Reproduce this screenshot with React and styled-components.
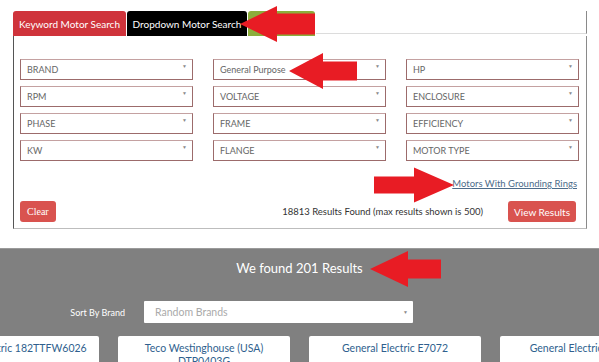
import styled, { createGlobalStyle } from 'styled-components';

const GlobalStyle = createGlobalStyle`
  html, body {
    margin: 0;
    padding: 0;
    overflow: hidden;
    background: #fff;
    font-family: Lato, 'Noto Sans', sans-serif;
  }
`;

const Page = styled.div`
  position: relative;
  width: 599px;
  height: 362px;
  overflow: hidden;
`;

const TopArea = styled.div`
  padding: 11px 12px 0 13px;
`;

const Tabs = styled.div`
  display: flex;
  height: 25px;
`;

const tabColors = {
  red: '#cf333b',
  black: '#000',
  green: '#8cae3c',
};

const Tab = styled.div`
  display: flex;
  align-items: center;
  justify-content: center;
  width: ${p => p.$width}px;
  background: ${p => tabColors[p.$tone]};
  color: #fff;
  font-size: 10px;
  border-radius: 3px 3px 0 0;
  margin-right: 1px;
  white-space: nowrap;
`;

const TabFill = styled.div`
  flex: 1;
  height: 23px;
  border-bottom: 1px solid #dcdcdc;
  border-right: 1px solid #8a8a8a;
  box-sizing: border-box;
  align-self: flex-start;
`;

const Panel = styled.div`
  border-left: 1px solid #555;
  border-right: 1px solid #8a8a8a;
  border-bottom: 1px solid #bdbdbd;
  padding: 23px 7px 6px 6px;
`;

const SelectGrid = styled.div`
  display: grid;
  grid-template-columns: repeat(3, 173px);
  grid-auto-rows: 21px;
  column-gap: 20px;
  row-gap: 6px;
`;

const SelectBox = styled.div`
  display: flex;
  justify-content: space-between;
  border: 1px solid #9c6b6b;
  border-top-color: #c4a1a1;
  box-sizing: border-box;
  padding: 0 5px 0 6px;
  color: #666;
  font-size: 9px;
  line-height: 19px;
`;

const Caret = styled.span`
  font-size: 5px;
  line-height: 12px;
  color: #8a8a8a;
`;

const LinkRow = styled.div`
  display: flex;
  justify-content: flex-end;
  margin-top: 17px;
  padding-right: 2px;
`;

const GroundLink = styled.a`
  color: #4d6c8a;
  font-size: 9.5px;
  line-height: 12px;
  text-decoration: underline;
`;

const ActionRow = styled.div`
  display: flex;
  justify-content: space-between;
  align-items: center;
  margin-top: 11px;
  padding-right: 3px;
`;

const RightGroup = styled.div`
  display: flex;
  align-items: center;
  gap: 25px;
`;

const Count = styled.span`
  color: #333;
  font-size: 9.5px;
`;

const Button = styled.button`
  height: 21px;
  padding: 0 ${p => (p.$serif ? 7 : 6)}px;
  border: none;
  border-radius: 3px;
  background: #d9534f;
  color: #fff;
  font-family: ${p => (p.$serif ? "'Liberation Serif', serif" : "Lato, sans-serif")};
  font-size: 10px;
`;

const Results = styled.div`
  margin-top: 19px;
  background: #808080;
  border-top: 1px solid #9a9a9a;
  padding-top: 11px;
  height: 130px;
`;

const Heading = styled.div`
  text-align: center;
  color: #fff;
  font-size: 13px;
  line-height: 16px;
`;

const SortRow = styled.div`
  display: flex;
  align-items: center;
  gap: 19px;
  margin-top: 25px;
`;

const SortLabel = styled.div`
  width: 125px;
  text-align: right;
  color: #fff;
  font-size: 9px;
`;

const SortSelect = styled.div`
  display: flex;
  justify-content: space-between;
  align-items: center;
  width: 269px;
  height: 22px;
  box-sizing: border-box;
  background: #fff;
  border-radius: 1px;
  padding: 0 5px 0 11px;
  color: #aaa;
  font-size: 10.5px;
`;

const Cards = styled.div`
  display: flex;
  gap: 19px;
  margin-top: 13px;
  margin-left: -73px;
`;

const Card = styled.div`
  flex: 0 0 172px;
  height: 40px;
  background: #fff;
  border-radius: 2px;
  padding: 6px 4px 0;
  box-sizing: border-box;
  text-align: center;
  color: #2f5f8e;
  font-size: 10.5px;
  line-height: 13px;
  white-space: ${p => (p.$wrap ? 'normal' : 'nowrap')};
`;

const ArrowSvg = styled.svg`
  position: absolute;
  left: 0;
  top: 0;
  pointer-events: none;
`;

function arrowPoints({ tx, ty, base, end, head, body }) {
  return [
    [tx, ty],
    [base, ty - head],
    [base, ty - body],
    [end, ty - body],
    [end, ty + body],
    [base, ty + body],
    [base, ty + head],
  ]
    .map(p => p.join(','))
    .join(' ');
}

const arrows = [
  { tx: 240, ty: 24, base: 277, end: 315, head: 18, body: 10.5 },
  { tx: 289, ty: 71, base: 323, end: 357, head: 18, body: 9.5 },
  { tx: 454, ty: 185, base: 414, end: 374, head: 17.5, body: 8.5 },
  { tx: 370, ty: 269, base: 408, end: 441, head: 18, body: 9.5 },
];

const selects = [
  'BRAND', 'General Purpose', 'HP',
  'RPM', 'VOLTAGE', 'ENCLOSURE',
  'PHASE', 'FRAME', 'EFFICIENCY',
  'KW', 'FLANGE', 'MOTOR TYPE',
];

const cards = [
  { name: 'General Electric 182TTFW6026' },
  { name: 'Teco Westinghouse (USA) DTP0403G', wrap: true },
  { name: 'General Electric E7072' },
  { name: 'General Electric 5KS184' },
];

export default function App() {
  return (
    <Page>
      <GlobalStyle />
      <TopArea>
        <Tabs>
          <Tab $tone="red" $width={113}>Keyword Motor Search</Tab>
          <Tab $tone="black" $width={120}>Dropdown Motor Search</Tab>
          <Tab $tone="green" $width={67} />
          <TabFill />
        </Tabs>
        <Panel>
          <SelectGrid>
            {selects.map(s => (
              <SelectBox key={s}>
                <span>{s}</span>
                <Caret>▼</Caret>
              </SelectBox>
            ))}
          </SelectGrid>
          <LinkRow>
            <GroundLink href="#">Motors With Grounding Rings</GroundLink>
          </LinkRow>
          <ActionRow>
            <Button $serif>Clear</Button>
            <RightGroup>
              <Count>18813 Results Found (max results shown is 500)</Count>
              <Button>View Results</Button>
            </RightGroup>
          </ActionRow>
        </Panel>
      </TopArea>

      <Results>
        <Heading>We found 201 Results</Heading>
        <SortRow>
          <SortLabel>Sort By Brand</SortLabel>
          <SortSelect>
            <span>Random Brands</span>
            <Caret>▼</Caret>
          </SortSelect>
        </SortRow>
        <Cards>
          {cards.map(c => (
            <Card key={c.name} $wrap={c.wrap}>{c.name}</Card>
          ))}
        </Cards>
      </Results>

      <ArrowSvg width="599" height="362">
        {arrows.map((a, i) => (
          <polygon key={i} points={arrowPoints(a)} fill="#e81c24" />
        ))}
      </ArrowSvg>
    </Page>
  );
}
